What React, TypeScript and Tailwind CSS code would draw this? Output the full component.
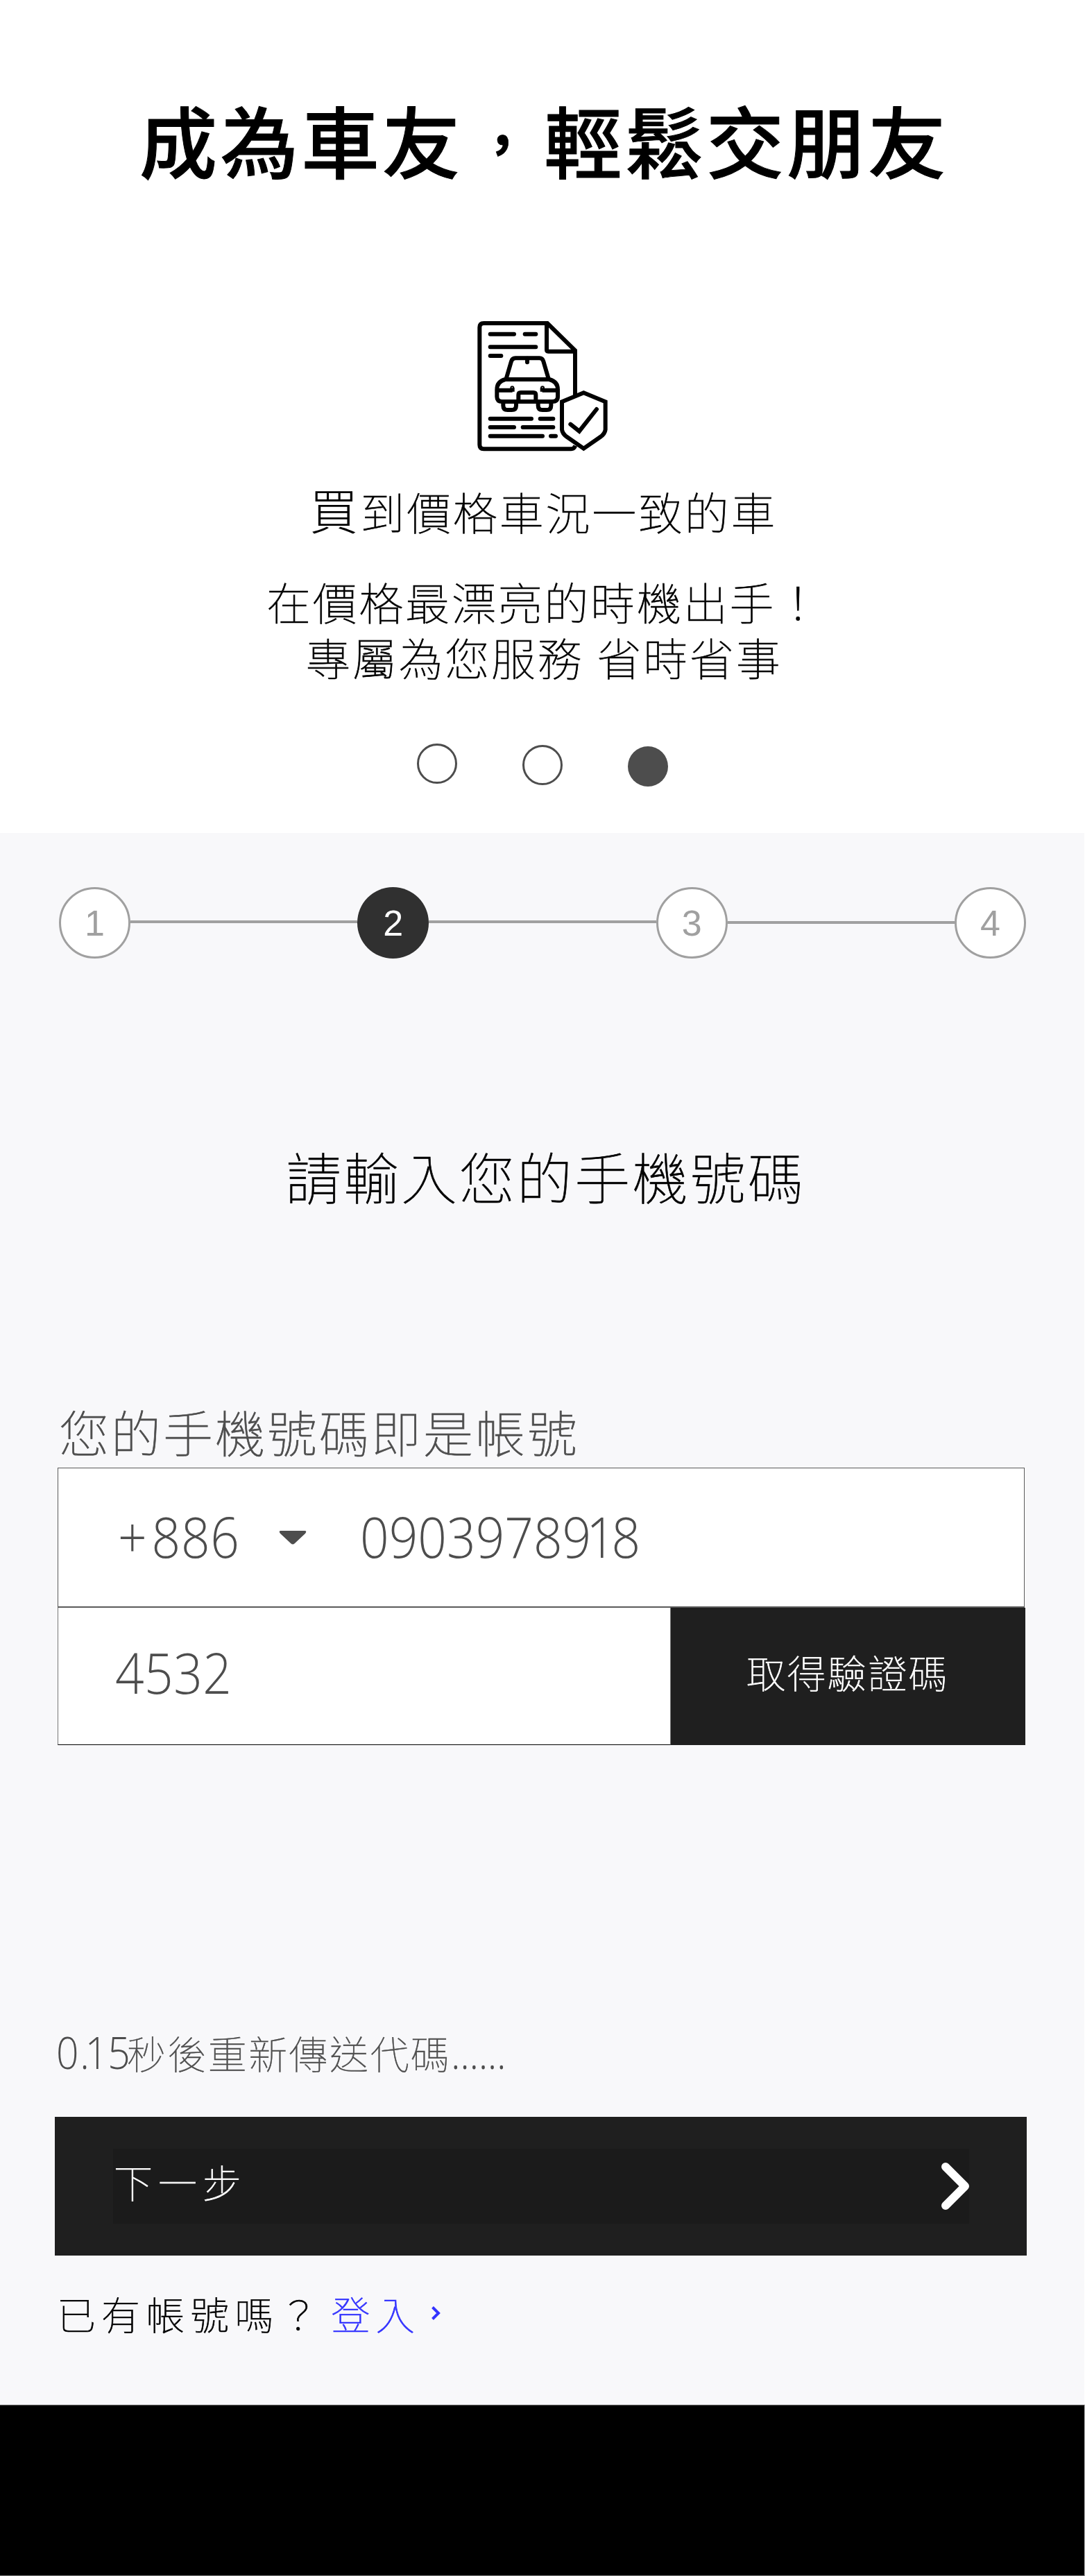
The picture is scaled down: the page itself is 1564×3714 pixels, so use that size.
import type { ReactNode } from 'react';

const CJK = "font-['Noto_Sans_CJK_TC',sans-serif]";

function ReportIcon() {
  return (
    <svg viewBox="0 0 720 690" className="h-[230px] w-[240px]" fill="none" stroke="#000" strokeWidth={18}>
      <path d="M507 390V196L387 78H112Q94 78 94 96V604Q94 622 112 622H490Q502 622 508 608" />
      <path d="M384 80V193Q384 200 391 200H507" />
      <g strokeLinecap="round">
        <path d="M140 125H243M290 125H337M140 181H337M140 219H187" />
        <path d="M140 491H318M356 491H412M140 528H243M281 528H412M140 566H366M402 566H423" />
      </g>
      <path d="M209 318L231 243Q235 229 249 229H353Q366 229 370 243L392 318" />
      <path d="M300 230V247" strokeLinecap="round" />
      <path d="M205 321H395Q432 330 432 365V396Q432 417 408 417H192Q169 417 169 396V365Q169 330 205 321Z" />
      <path d="M172 368H236M236 374V358M430 368H365M365 374V358" />
      <circle cx={235} cy={358} r={3} strokeWidth={12} />
      <circle cx={366} cy={358} r={3} strokeWidth={12} />
      <path d="M262 417V388Q262 378 272 378H327Q337 378 337 388V417" />
      <path d="M196 417V434Q196 453 215 453H233Q252 453 252 434V417M347 417V434Q347 453 366 453H384Q403 453 403 434V417" />
      <path d="M544 379L638 418V538Q636 556 616 570L544 620L472 570Q452 556 450 538V418Z" fill="#fff" />
      <path d="M487 515L525 545L600 450" strokeLinecap="round" />
    </svg>
  );
}

function Step({ n, active = false }: { n: number; active?: boolean }) {
  return (
    <div
      className={`flex size-[103px] shrink-0 items-center justify-center rounded-full text-[52px] leading-none ${
        active ? 'bg-[#303030] text-white' : 'border-[3px] border-[#a0a0a0] bg-white text-[#a0a0a0]'
      }`}
    >
      {n}
    </div>
  );
}

function Digits({ children, className }: { children: ReactNode; className: string }) {
  return (
    <span
      className={`inline-block origin-left scale-x-[0.89] font-['Open_Sans',sans-serif] font-light whitespace-nowrap [-webkit-text-stroke:0px] ${className}`}
    >
      {children}
    </span>
  );
}

export default function App() {
  return (
    <div
      className={`flex h-[3714px] w-[1564px] flex-col overflow-hidden bg-white font-thin text-black [-webkit-text-stroke:0.7px] ${CJK}`}
    >
      <header className="h-[1201px] shrink-0">
        <h1 className="mt-[120px] ml-[201px] h-[160px] text-[112px] leading-[160px] font-medium tracking-[4.7px] whitespace-nowrap [-webkit-text-stroke:1px]">
          成為車友<span className="inline-block origin-[56px_90px] scale-x-[0.68] scale-y-[0.72] font-bold">，</span>輕鬆交朋友
        </h1>
        <div className="mt-[160px] ml-[660px]">
          <ReportIcon />
        </div>
        <p className="mt-[26px] ml-[446px] flex h-20 items-center text-[64px] leading-[80px] tracking-[2.75px] whitespace-nowrap">
          <span className="mb-[4px] w-[73.5px] shrink-0 text-[70px] font-light [-webkit-text-stroke:0px]">買</span>
          到價格車況一致的車
        </p>
        <p className="mt-[50px] ml-[384px] h-20 text-[64px] leading-[80px] tracking-[2.75px] whitespace-nowrap">
          在價格最漂亮的時機出手！
        </p>
        <p className="ml-[441px] h-20 text-[64px] leading-[80px] tracking-[2.75px] whitespace-nowrap">
          專屬為您服務<span className="inline-block w-[19px]"> </span>省時省事
        </p>
        <div className="mt-[86px] ml-[601px] flex gap-[94px]">
          <i className="size-[58px] rounded-full border-[3px] border-[#4d4d4d]" />
          <i className="mt-[2px] size-[58px] rounded-full border-[3px] border-[#4d4d4d]" />
          <i className="mt-[4px] size-[58px] rounded-full bg-[#4d4d4d]" />
        </div>
      </header>

      <main className="h-[2266px] w-[1563px] shrink-0 bg-[#f8f8fa]">
        <div className="ml-[85px] flex h-[181px] w-[1394px] items-end font-['Liberation_Sans',sans-serif] font-normal [-webkit-text-stroke:0px]">
          <Step n={1} />
          <div className="mb-[51px] h-1 flex-1 bg-[#a0a0a0]" />
          <Step n={2} active />
          <div className="mb-[51px] h-1 flex-1 bg-[#a0a0a0]" />
          <Step n={3} />
          <div className="mb-[50px] h-1 flex-1 bg-[#a0a0a0]" />
          <Step n={4} />
        </div>

        <h2 className="mt-[262px] ml-[412px] h-[101px] text-[80px] leading-[100px] tracking-[3.25px] whitespace-nowrap">
          請輸入您的手機號碼
        </h2>

        <label className="mt-[268px] ml-[85px] block h-[103px] text-[72px] leading-[100px] tracking-[3px] whitespace-nowrap text-[#4d4d4d]">
          您的手機號碼即是帳號
        </label>
        <div className="ml-[83px] w-[1395px] text-[#4d4d4d]">
          <div className="flex h-[202px] w-[1394px] items-center border border-b-2 border-[#5a5a5a] bg-white">
            <Digits className="mb-[5px] ml-[86px] w-[232px] text-[82px] leading-[100px] tracking-[0.8px]">
              <span className="mr-[7px]">+</span>886
            </Digits>
            <svg viewBox="0 0 40 20" className="h-5 w-10">
              <path d="M3 0H37Q41 0 38 4L23 18Q20 21 17 18L2 4Q-1 0 3 0Z" fill="#4d4d4d" />
            </svg>
            <Digits className="mb-[5px] ml-[77px] text-[82px] leading-[100px]">
              0903978<span className="-mr-[6px]">9</span>
              <span className="-mr-[6px] -ml-[2px]">1</span>8
            </Digits>
          </div>
          <div className="flex h-[198px]">
            <div className="flex flex-1 items-center border border-t-0 border-[#777] border-b-black bg-white">
              <Digits className="mb-[14px] ml-[82px] text-[82px] leading-[100px] tracking-[0.5px]">4532</Digits>
            </div>
            <button className="w-[511px] bg-[#1f1f1f] pr-[1px] pb-[14px] text-[56px] font-thin tracking-[2.4px] text-white">
              取得驗證碼
            </button>
          </div>
        </div>

        <p className="mt-[403px] ml-[81px] flex h-20 text-[56px] leading-[80px] tracking-[2.4px] whitespace-nowrap text-[#4d4d4d] [-webkit-text-stroke:0.4px]">
          <Digits className="w-[102px] text-[64px] leading-[80px] tracking-normal">
            0<span className="ml-[2px]">.</span><span className="-ml-[7px]">15</span>
          </Digits>
          秒後重新傳送代碼
          <Digits className="text-[64px] leading-[80px] tracking-[-0.4px]">......</Digits>
        </p>

        <button className="mt-[53px] ml-[79px] block h-[200px] w-[1401px] bg-[#1f1f1f] text-left text-white">
          <span className="ml-[84px] flex h-[108px] w-[1234px] items-center justify-between bg-[#1b1b1b] text-[56px] leading-[80px] font-thin tracking-[8px]">
            <span className="mb-[15px] ml-[1px]">下一步</span>
            <svg viewBox="0 0 40 68" className="h-[68px] w-10" fill="none" stroke="#fff" strokeWidth={12} strokeLinecap="round" strokeLinejoin="round">
              <path d="M6 6L34 34L6 62" />
            </svg>
          </span>
        </button>

        <p className="mt-[43px] ml-[82px] flex h-20 items-center text-[56px] leading-[80px] tracking-[8.1px] whitespace-nowrap">
          已有帳號嗎？
          <a className="ml-[11px] flex items-center text-[#3333ff]">
            登入
            <svg viewBox="0 0 13 20" className="ml-[16px] h-5 w-[13px]" fill="none" stroke="#3333ff" strokeWidth={4}>
              <path d="M1.5 1.5L10 10L1.5 18.5" />
            </svg>
          </a>
        </p>
      </main>
      <footer className="flex-1 border-t border-r border-b border-[#777] border-r-[#bbb] bg-black" />
    </div>
  );
}
